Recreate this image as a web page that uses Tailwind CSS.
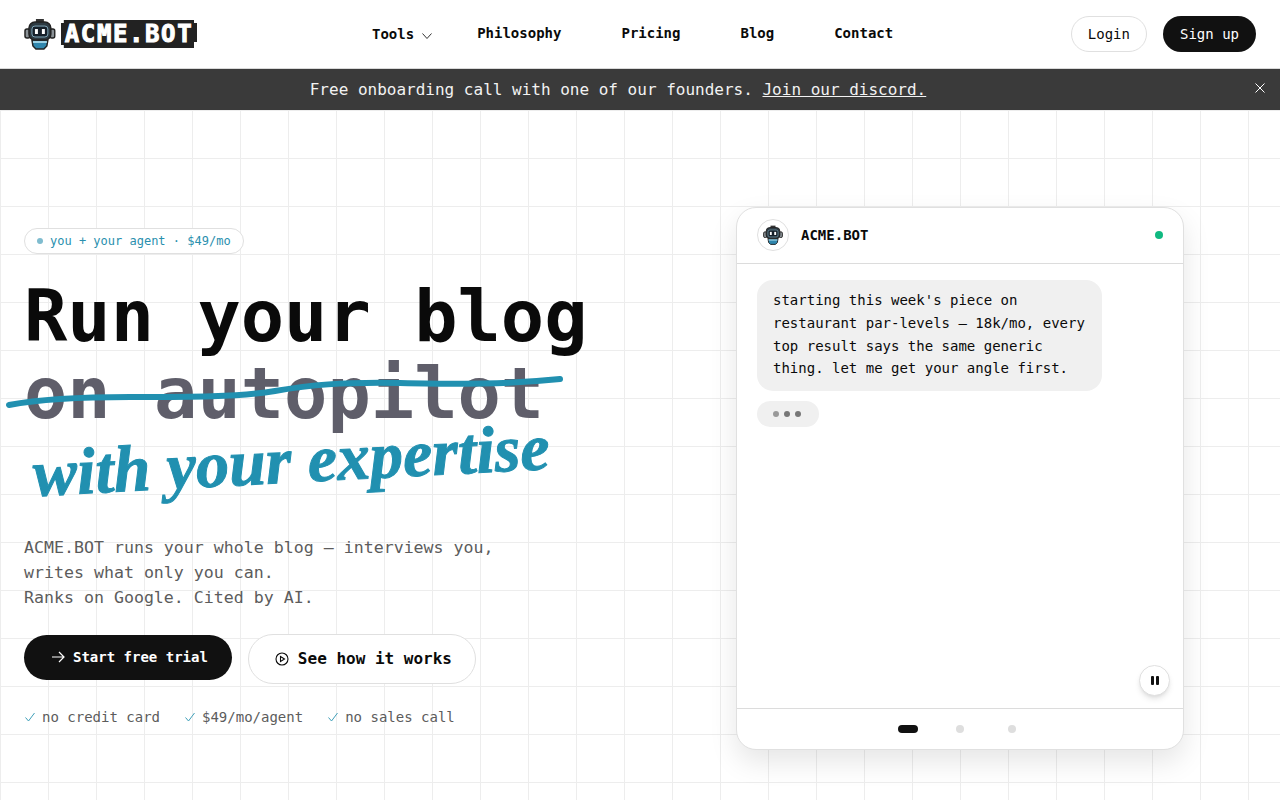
<!DOCTYPE html>
<html lang="en">
<head>
  <meta charset="UTF-8" />
  <title>ACME.BOT</title>
  <script src="https://cdn.jsdelivr.net/npm/@tailwindcss/browser@4"></script>
</head>
<body class="bg-white text-[#0a0a0a] font-['DejaVu_Sans_Mono','Liberation_Mono',monospace] overflow-hidden h-[800px]">
  <!-- robot icon, reused in the header and the chat card -->
  <svg class="hidden">
    <symbol id="robot" viewBox="0 0 32 32">
      <rect x="1" y="11" width="5" height="9" rx="2" fill="#8a9196" stroke="#222" stroke-width="1.5"/>
      <rect x="26" y="11" width="5" height="9" rx="2" fill="#8a9196" stroke="#222" stroke-width="1.5"/>
      <path d="M12 1h8v3h-8z" fill="#333"/>
      <path d="M8 22h16l-1 6-3 3h-8l-3-3z" fill="#2f86ad" stroke="#222" stroke-width="1.5"/>
      <rect x="5" y="4" width="22" height="18" rx="6" fill="#2d3a42" stroke="#222" stroke-width="1.5"/>
      <rect x="8" y="8" width="16" height="11" rx="3" fill="#16202a" stroke="#7fa6b8"/>
      <rect x="11" y="11" width="3" height="5" fill="#fff"/>
      <rect x="18" y="11" width="3" height="5" fill="#fff"/>
      <path d="M9 23h14v2H9z" fill="#9ad0e4"/>
    </symbol>
  </svg>

  <!-- Navigation -->
  <header class="flex items-center h-[69px] px-6 border-b border-[#d9d9d9] bg-white">
    <a href="#" class="flex items-center gap-[5px] w-[173px] shrink-0">
      <svg class="w-8 h-8"><use href="#robot"/></svg>
      <span class="bg-[#222] text-white font-black text-[24px] leading-[28px] tracking-[1.6px] [-webkit-text-stroke:1px_white] pl-[4px] w-[137px] h-[28px] whitespace-nowrap [clip-path:polygon(3px_0,calc(100%-3px)_0,calc(100%-3px)_3px,100%_3px,100%_calc(100%-6px),calc(100%-3px)_calc(100%-6px),calc(100%-3px)_100%,3px_100%,3px_calc(100%-3px),0_calc(100%-3px),0_3px,3px_3px)]">ACME.BOT</span>
    </a>
    <nav class="flex items-center ml-[175px] -mt-[2px] text-sm font-semibold">
      <a href="#" class="flex items-center gap-2 mt-[2px]">Tools
        <svg class="w-[10px] h-[6px] mt-1 text-[#333]" viewBox="0 0 10 6" fill="none" stroke="currentColor"><path d="M.5.5 5 5.5 9.500.5"/></svg>
      </a>
      <a href="#" class="ml-[45px]">Philosophy</a>
      <a href="#" class="ml-[60px]">Pricing</a>
      <a href="#" class="ml-[60px]">Blog</a>
      <a href="#" class="ml-[60px]">Contact</a>
    </nav>
    <div class="flex items-center gap-4 ml-auto text-sm">
      <a href="#" class="flex items-center h-9 px-4 rounded-full border border-[#e0e0e0]">Login</a>
      <a href="#" class="flex items-center h-9 px-[17px] rounded-full bg-[#111] text-white">Sign up</a>
    </div>
  </header>

  <!-- Banner -->
  <div class="relative flex items-center justify-center h-[41px] pr-[44px] bg-[#3a3a3a] text-[#f2f2f2] text-base">
    <p>Free onboarding call with one of our founders. <a href="#" class="underline">Join our discord.</a></p>
    <svg class="absolute right-[15px] top-[14px] w-[10px] h-[10px]" viewBox="0 0 10 10" stroke="#fff"><path d="M.5.500l9 9M9.500.500l-9 9"/></svg>
  </div>

  <!-- Hero -->
  <main class="flex items-start justify-between h-[690px] pt-[97px] px-6 pr-[96px] bg-[linear-gradient(to_right,#ededed_1px,transparent_1px),linear-gradient(to_bottom,#ededed_1px,transparent_1px)] bg-[size:48px_48px]">
    <section class="w-[600px] pt-[20px]">
      <div class="inline-flex items-center gap-2 h-[26px] px-3 rounded-full border border-[#e0e0e0] bg-white text-xs text-[#2a8fae]">
        <span class="w-[6px] h-[6px] rounded-full bg-[#7fbccf]"></span>
        <span class="-ml-[1px]">you + your agent · $49/mo</span>
      </div>

      <h1 class="relative mt-[24px] text-[72px] leading-[77px] font-bold whitespace-nowrap">
        <span class="block">Run your blog</span>
        <span class="block text-[#5f5e6a]">on autopilot</span>
        <span class="block w-fit ml-[9px] -rotate-[3deg] origin-left font-['Liberation_Serif',serif] italic font-bold [-webkit-text-stroke:1px_#2190b0] text-[66px] leading-[84px] text-[#2190b0]">with your expertise</span>
        <svg class="absolute -left-[24px] top-[73px] w-[600px] h-[60px]" viewBox="0 0 600 60" fill="none" stroke="#2190b0" stroke-width="6" stroke-linecap="round" stroke-linejoin="round"><path d="M9 54C30 50 70 46 130 46S240 46 275 40 340 31 400 32 500 34 560 28"/></svg>
      </h1>

      <p class="mt-[19px] text-[16.6px] leading-[25px] text-[#5c5c5c]">ACME.BOT runs your whole blog — interviews you,<br/>writes what only you can.<br/>Ranks on Google. Cited by AI.</p>

      <div class="flex items-start gap-4 mt-[25px]">
        <a href="#" class="flex items-center gap-2 h-[45px] pl-[27px] pr-6 pb-[2px] rounded-full bg-[#111] text-white text-sm font-semibold">
          <svg class="w-[14px] h-[14px]" viewBox="0 0 14 14" fill="none" stroke="currentColor" stroke-width="1.2"><path d="M1 7h12M8 2l5 5-5 5"/></svg>
          Start free trial
        </a>
        <a href="#" class="flex items-center gap-[9px] h-[50px] pl-[26px] pr-[23px] -mt-[1px] rounded-full border border-[#e0e0e0] bg-white text-base font-semibold">
          <svg class="w-[14px] h-[14px]" viewBox="0 0 14 14" fill="none" stroke="currentColor" stroke-width="1.1"><circle cx="7" cy="7" r="6"/><path d="M5.500 4.500 9.500 7l-4 2.500z"/></svg>
          See how it works
        </a>
      </div>

      <ul class="flex gap-[25px] mt-[23px] pl-[1px] text-sm text-[#5c5c5c]">
        <li class="flex items-center gap-[7px]"><svg class="w-[10px] h-[10px]" viewBox="0 0 10 10" fill="none" stroke="#3f9fb8"><path d="M.5 5.500 3.500 9 9.500 1"/></svg>no credit card</li>
        <li class="flex items-center gap-[7px]"><svg class="w-[10px] h-[10px]" viewBox="0 0 10 10" fill="none" stroke="#3f9fb8"><path d="M.5 5.500 3.500 9 9.500 1"/></svg>$49/mo/agent</li>
        <li class="flex items-center gap-[7px]"><svg class="w-[10px] h-[10px]" viewBox="0 0 10 10" fill="none" stroke="#3f9fb8"><path d="M.5 5.500 3.500 9 9.500 1"/></svg>no sales call</li>
      </ul>
    </section>

    <!-- Chat card -->
    <aside class="relative flex flex-col w-[448px] h-[543px] rounded-[20px] border border-[#e0e0e0] bg-white shadow-[0_12px_28px_rgba(0,0,0,0.1)]">
      <div class="flex items-center h-[56px] px-5 pb-[2px] border-b border-[#dcdcdc]">
        <span class="flex items-center justify-center w-8 h-8 rounded-full border border-[#e0e0e0]"><svg class="w-[20px] h-[20px]"><use href="#robot"/></svg></span>
        <span class="ml-3 text-sm font-semibold">ACME.BOT</span>
        <span class="ml-auto w-2 h-2 rounded-full bg-[#10b981]"></span>
      </div>
      <div class="flex-1 px-5 pt-4">
        <p class="w-[345px] px-4 pt-[9px] pb-[11px] rounded-[16px] bg-[#f0f0f0] text-sm leading-[22.750px]">starting this week's piece on restaurant par-levels — 18k/mo, every top result says the same generic thing. let me get your angle first.</p>
        <div class="flex items-center gap-[5px] w-[62px] h-[26px] mt-[10px] px-4 rounded-[14px] bg-[#f0f0f0]">
          <span class="w-[6px] h-[6px] rounded-full bg-[#999]"></span>
          <span class="w-[6px] h-[6px] rounded-full bg-[#777]"></span>
          <span class="w-[6px] h-[6px] rounded-full bg-[#777]"></span>
        </div>
      </div>
      <button class="absolute right-[13px] bottom-[53px] flex items-center justify-center gap-[2px] w-[31px] h-[31px] rounded-full border border-[#e0e0e0] bg-white shadow-md">
        <span class="w-[3px] h-[9px] bg-[#111] rounded-[1px]"></span>
        <span class="w-[3px] h-[9px] bg-[#111] rounded-[1px]"></span>
      </button>
      <div class="flex items-center h-[41px] pl-[161px] border-t border-[#dcdcdc]">
        <span class="w-5 h-2 rounded-full bg-[#111]"></span>
        <span class="w-2 h-2 ml-[38px] rounded-full bg-[#dedede]"></span>
        <span class="w-2 h-2 ml-[44px] rounded-full bg-[#dedede]"></span>
      </div>
    </aside>
  </main>
</body>
</html>
